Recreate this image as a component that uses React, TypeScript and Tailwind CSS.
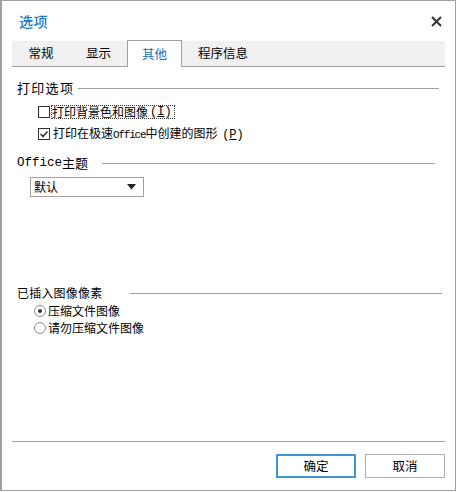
import React from "react";

const sans = { fontFamily: '"Noto Sans CJK SC", "Noto Sans", sans-serif' };

function SectionHeader({ label, labelClass, lineClass }: { label: React.ReactNode; labelClass: string; lineClass: string }) {
  return (
    <div className="flex items-center h-[18px]">
      <div className={labelClass}>{label}</div>
      <div className={`h-px bg-[#a0a0a0] flex-1 ${lineClass}`} />
    </div>
  );
}

export default function App() {
  return (
    <div className="w-[458px] h-[492px] bg-white" style={sans}>
      <div className="w-[456px] h-[491px] border border-[#a0a0a0] border-l-2 bg-white flex flex-col text-black">
        {/* title bar */}
        <div className="h-[40px] flex items-center justify-between pl-[17px] pr-[13px] shrink-0">
          <span className="text-[14px] font-medium text-[#1b78c2] tracking-[0.5px] mt-[1px]">选项</span>
          <svg width="11" height="11" viewBox="0 0 11 11" className="mt-[1px]">
            <path d="M1 1 L10 10 M10 1 L1 10" stroke="#333" strokeWidth="2" />
          </svg>
        </div>
        {/* tabs */}
        <div className="mx-[10px] h-[26px] bg-[#f0f0f0] border-b border-[#a0a0a0] flex items-end shrink-0 text-[12.5px]">
          <div className="w-[58px] h-full flex items-center justify-center">常规</div>
          <div className="w-[57px] h-full flex items-center justify-center">显示</div>
          <div className="w-[55px] h-[27px] -mb-px bg-white border border-b-0 border-[#a0a0a0] flex items-center justify-center text-[#1a72b6]">其他</div>
          <div className="pl-[16px] h-full flex items-center">程序信息</div>
        </div>
        {/* content */}
        <div className="pl-[15px] flex flex-col">
          <div className="mt-[12px]">
            <SectionHeader label="打印选项" labelClass="text-[13px] tracking-[1.3px]" lineClass="ml-[4px] mr-[16px]" />
          </div>
          <div className="mt-[4px] h-[22px] flex items-center pl-[21px] text-[12px]">
            <span className="w-[12px] h-[12px] border border-[#333] bg-white shrink-0" />
            <span className="ml-[1px] border border-dotted border-[#333] h-[14px] flex items-center pr-[2px] leading-none">
              打印背景色和图像 <span className="ml-[2px]" style={{ fontFamily: '"Liberation Mono", monospace' }}>(<span className="underline">I</span>)</span>
            </span>
          </div>
          <div className="h-[22px] flex items-center pl-[21px] text-[12px]">
            <span className="w-[12px] h-[12px] border border-[#333] bg-white shrink-0 flex items-center justify-center">
              <svg width="10" height="10" viewBox="0 0 10 10">
                <path d="M1.5 5 L4 7.5 L8.5 2.5" stroke="#222" strokeWidth="1.3" fill="none" />
              </svg>
            </span>
            <span className="ml-[3px] leading-none">
              打印在极速<span className="text-[11px]" style={{ fontFamily: '"Liberation Mono", monospace', letterSpacing: "-1.2px" }}>Office</span>中创建的图形 <span className="ml-[2px]" style={{ fontFamily: '"Liberation Mono", monospace' }}>(<span className="underline">P</span>)</span>
            </span>
          </div>
          <div className="mt-[9px]">
            <SectionHeader
              label={<><span style={{ fontFamily: '"Liberation Mono", monospace' }} className="text-[12.5px]">Office</span><span className="text-[13px]">主题</span></>}
              labelClass="flex items-center"
              lineClass="ml-[14px] mr-[20px]"
            />
          </div>
          <div className="mt-[5px] ml-[13px] w-[114px] h-[20px] border border-[#a0a0a0] flex items-center justify-between pl-[3px] pr-[7px] text-[12px]">
            <span>默认</span>
            <svg width="9" height="6" viewBox="0 0 9 6">
              <path d="M0 0 L9 0 L4.5 5.5 Z" fill="#222" />
            </svg>
          </div>
          <div className="mt-[87px]">
            <SectionHeader label="已插入图像像素" labelClass="text-[12px] tracking-[0.2px]" lineClass="ml-[28px] mr-[13px]" />
          </div>
          <div className="h-[17px] flex items-center pl-[17px] text-[12px]">
            <span className="w-[12px] h-[12px] rounded-full border border-[#8a8a8a] bg-white flex items-center justify-center shrink-0">
              <span className="w-[4px] h-[4px] rounded-full bg-[#333]" />
            </span>
            <span className="ml-[2px] leading-none">压缩文件图像</span>
          </div>
          <div className="h-[17px] flex items-center pl-[17px] text-[12px]">
            <span className="w-[12px] h-[12px] rounded-full border border-[#8a8a8a] bg-white shrink-0" />
            <span className="ml-[2px] leading-none">请勿压缩文件图像</span>
          </div>
        </div>
        <div className="flex-1" />
        <div className="mx-[10px] h-px bg-[#a0a0a0] shrink-0" />
        <div className="flex justify-end gap-[9px] pr-[10px] mt-[12px] mb-[12px] shrink-0 text-[12.5px]">
          <div className="w-[80px] h-[24px] border-2 border-[#3c97d6] bg-white flex items-center justify-center">确定</div>
          <div className="w-[80px] h-[24px] border border-[#adadad] bg-white flex items-center justify-center">取消</div>
        </div>
      </div>
    </div>
  );
}
